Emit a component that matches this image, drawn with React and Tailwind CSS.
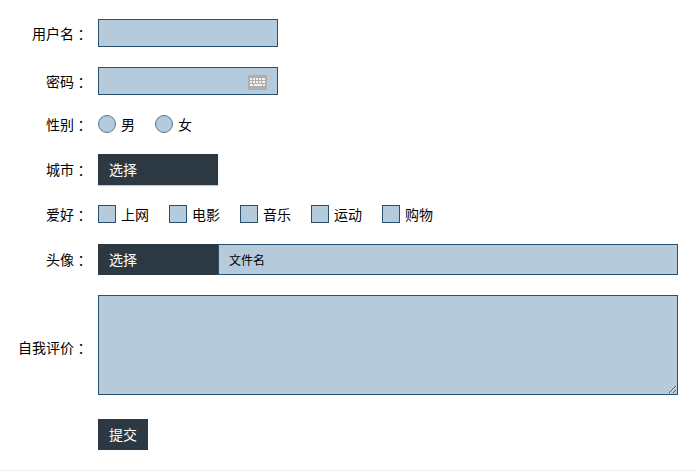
import React from "react";

function Label({ children, className = "" }) {
  return (
    <div className={`w-[88px] shrink-0 mr-[10px] text-right text-[14px] leading-[20px] text-black ${className}`}>
      {children}
      <span className="font-['Noto_Sans_CJK_TC',sans-serif] align-[-1px]">：</span>
    </div>
  );
}

function Keyboard() {
  return (
    <svg width="19" height="15" viewBox="0 0 19 15" className="absolute left-[149px] top-[7px]" aria-hidden="true">
      <rect width="19" height="15" fill="#aeaeae" />
      <g fill="#f2f2f2">
        <rect x="2" y="3" width="2" height="2" /><rect x="5" y="3" width="2" height="2" /><rect x="8" y="3" width="2" height="2" /><rect x="11" y="3" width="2" height="2" /><rect x="14" y="3" width="3" height="2" />
        <rect x="2" y="6" width="2" height="2" /><rect x="5" y="6" width="2" height="2" /><rect x="8" y="6" width="2" height="2" /><rect x="11" y="6" width="2" height="2" /><rect x="14" y="6" width="3" height="2" />
        <rect x="2" y="9" width="3" height="2" /><rect x="6" y="9" width="8" height="2" /><rect x="15" y="9" width="2" height="2" />
      </g>
    </svg>
  );
}

export default function App() {
  const hobbies = ["上网", "电影", "音乐", "运动", "购物"];
  return (
    <form className="w-[696px] h-[471px] bg-white border-b border-[#eeeeee] pt-[19px] font-['Microsoft_YaHei','Noto_Sans_CJK_SC','Liberation_Sans',sans-serif] text-[14px] text-black overflow-hidden">
      <div className="flex items-center h-[28px]">
        <Label>用户名</Label>
        <input type="text" className="w-[180px] h-[28px] bg-[#b5cbdb] border border-[#2a5070] outline-none" />
      </div>
      <div className="flex items-center h-[28px] mt-[20px]">
        <Label>密码</Label>
        <div className="relative w-[180px] h-[28px] bg-[#b5cbdb] border border-[#2a5070]">
          <Keyboard />
        </div>
      </div>
      <div className="flex items-center h-[18px] mt-[20px]">
        <Label>性别</Label>
        <label className="flex items-center mr-[20px]">
          <span className="w-[18px] h-[18px] rounded-full bg-[#b5cbdb] border border-[#56758f] mr-[5px]" />
          <span>男</span>
        </label>
        <label className="flex items-center">
          <span className="w-[18px] h-[18px] rounded-full bg-[#b5cbdb] border border-[#56758f] mr-[5px]" />
          <span>女</span>
        </label>
      </div>
      <div className="flex items-center h-[31px] mt-[21px]">
        <Label>城市</Label>
        <button type="button" className="w-[120px] h-[31px] bg-[#2c3943] shadow-[0_1px_1px_#b5cbdb] text-white text-left pl-[11px]">选择</button>
      </div>
      <div className="flex items-center h-[18px] mt-[20px]">
        <Label>爱好</Label>
        <div className="flex gap-[20px]">
          {hobbies.map((h) => (
            <label key={h} className="flex items-center">
              <span className="w-[18px] h-[18px] bg-[#b5cbdb] border border-[#2a5070] mr-[5px]" />
              <span>{h}</span>
            </label>
          ))}
        </div>
      </div>
      <div className="flex items-center h-[31px] mt-[21px]">
        <Label>头像</Label>
        <button type="button" className="w-[120px] h-[31px] bg-[#2c3943] text-white text-left pl-[11px]">选择</button>
        <div className="flex items-center w-[460px] h-[31px] bg-[#b5cbdb] border border-[#2a5070] pl-[10px] text-[12px]">文件名</div>
      </div>
      <div className="flex items-center h-[100px] mt-[20px]">
        <Label className="mt-[4px]">自我评价</Label>
        <textarea className="block w-[580px] h-[100px] bg-[#b5cbdb] border border-[#2a5070] outline-none" />
      </div>
      <div className="flex mt-[24px] pl-[98px]">
        <button type="submit" className="w-[50px] h-[31px] bg-[#2c3943] text-white">提交</button>
      </div>
    </form>
  );
}
